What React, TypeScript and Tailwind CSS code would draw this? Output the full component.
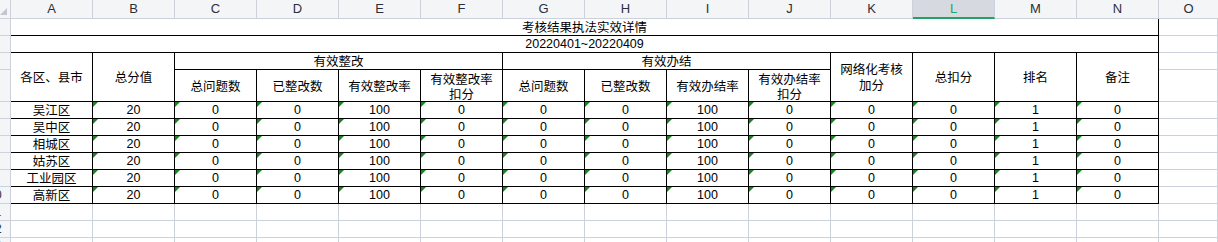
import type { ReactNode } from 'react';

const COLS = ['A', 'B', 'C', 'D', 'E', 'F', 'G', 'H', 'I', 'J', 'K', 'L', 'M', 'N'];

const DISTRICTS = ['吴江区', '吴中区', '相城区', '姑苏区', '工业园区', '高新区'];
const VALUES = ['20', '0', '0', '100', '0', '0', '0', '100', '0', '0', '0', '1', '0'];

const SUB_HEADERS: ReactNode[] = [
  '总问题数', '已整改数', '有效整改率', <>有效整改率<br />扣分</>,
  '总问题数', '已整改数', '有效办结率', <>有效办结率<br />扣分</>,
];

const CJK = "font-['Noto_Sans_CJK_SC',sans-serif] text-[12.5px] text-black";
const NUM = "font-['Liberation_Sans','Noto_Sans_CJK_SC',sans-serif] text-[12.5px] text-black";

function Cell({ children, className = '', dark = false, mark = false }: {
  children?: ReactNode; className?: string; dark?: boolean; mark?: boolean;
}) {
  return (
    <div className={`relative flex items-center justify-center border-r border-b text-center ${dark ? 'border-black' : 'border-[#ccd1dc]'} ${className}`}>
      {mark && <span className="absolute left-0 top-0 h-0 w-0 border-t-[5px] border-r-[5px] border-t-[#17861b] border-r-transparent" />}
      {children}
    </div>
  );
}

function RowHead({ n }: { n: number }) {
  return (
    <div className="overflow-hidden border-r border-b border-[#ccd1dc] bg-[#f4f5f7]">
      <div className="-ml-[20px] flex h-full w-[30px] items-center justify-center font-['Liberation_Sans',sans-serif] text-[12px] text-[#2b2f3a]">
        {n}
      </div>
    </div>
  );
}

export default function App() {
  return (
    <div className="h-[242px] w-full overflow-hidden bg-white">
      <div className="grid grid-cols-[11px_repeat(14,82px)_1fr] grid-rows-[19px_17px_17px_17px_32px_repeat(9,17px)]">
        {/* column headers */}
        <div className="relative border-r border-b border-[#ccd1dc] bg-[#f4f5f7]">
          <svg className="absolute left-0 top-[8px]" width="8" height="8" viewBox="0 0 8 8">
            <polygon points="7,0 7,7 0,7" fill="#c3c6cc" />
          </svg>
        </div>
        {COLS.map(c => (
          <div
            key={c}
            className={`flex items-center justify-center border-r border-b font-['Liberation_Sans',sans-serif] text-[13px] ${
              c === 'L'
                ? 'border-r-[#ccd1dc] border-b-2 border-b-[#1fa463] bg-[#d6d9df] text-[#1fa463]'
                : 'border-[#ccd1dc] bg-[#f4f5f7] text-[#2b2f3a]'
            }`}
          >
            {c}
          </div>
        ))}
        <div className="flex items-center justify-center border-b border-[#ccd1dc] bg-[#f4f5f7] font-['Liberation_Sans',sans-serif] text-[13px] text-[#2b2f3a]">
          O
        </div>

        {/* title rows */}
        <RowHead n={1} />
        <Cell dark className={`col-span-14 pt-[1px] ${CJK}`}>考核结果执法实效详情</Cell>
        <Cell />
        <RowHead n={2} />
        <Cell dark className={`col-span-14 pt-[1px] ${NUM}`}>20220401~20220409</Cell>
        <Cell />

        {/* header rows */}
        <RowHead n={3} />
        <Cell dark className={`row-span-2 ${CJK}`}>各区、县市</Cell>
        <Cell dark className={`row-span-2 ${CJK}`}>总分值</Cell>
        <Cell dark className={`col-span-4 pt-[1px] ${CJK}`}>有效整改</Cell>
        <Cell dark className={`col-span-4 pt-[1px] ${CJK}`}>有效办结</Cell>
        <Cell dark className={`row-span-2 leading-[16px] ${CJK}`}>网络化考核<br />加分</Cell>
        <Cell dark className={`row-span-2 ${CJK}`}>总扣分</Cell>
        <Cell dark className={`row-span-2 ${CJK}`}>排名</Cell>
        <Cell dark className={`row-span-2 ${CJK}`}>备注</Cell>
        <Cell />
        <RowHead n={4} />
        {SUB_HEADERS.map((h, i) => (
          <Cell key={i} dark className={`leading-[15px] ${CJK}`}>{h}</Cell>
        ))}
        <Cell />

        {/* data rows */}
        {DISTRICTS.map((d, r) => (
          <div key={d} className="contents">
            <RowHead n={r + 5} />
            <Cell dark className={`pt-[1px] ${CJK}`}>{d}</Cell>
            {VALUES.map((v, i) => (
              <Cell key={i} dark mark className={`pt-[1px] ${NUM}`}>{v}</Cell>
            ))}
            <Cell />
          </div>
        ))}

        {/* empty rows */}
        {[11, 12, 13].map(n => (
          <div key={n} className="contents">
            <RowHead n={n} />
            {COLS.map(c => <Cell key={c} />)}
            <Cell />
          </div>
        ))}
      </div>
    </div>
  );
}
